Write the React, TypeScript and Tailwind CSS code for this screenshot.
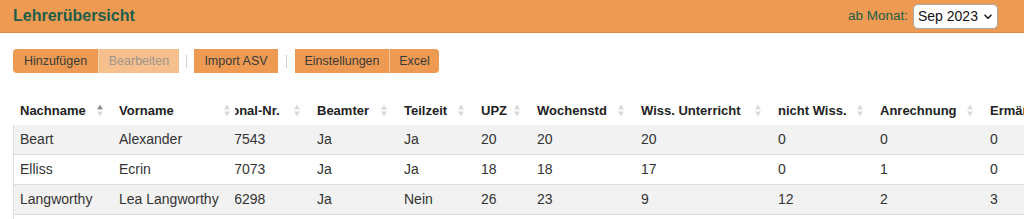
import React from 'react';

const Sort = ({ active }: { active?: boolean }) => (
  <svg width="6" height="13" viewBox="0 0 6 13" className="shrink-0">
    <path d="M0 5.5 L3 0.5 L6 5.5Z" fill={active ? '#8f8f8f' : '#dadada'} />
    <path d="M0 7.5 L3 12.5 L6 7.5Z" fill="#dadada" />
  </svg>
);

type Row = {
  n: string; v: string; p: string; b: string; t: string;
  upz: string; w: string; wiss: string; nw: string; an: string; er: string;
};

const rows: Row[] = [
  { n: 'Beart', v: 'Alexander', p: '10027543', b: 'Ja', t: 'Ja', upz: '20', w: '20', wiss: '20', nw: '0', an: '0', er: '0' },
  { n: 'Elliss', v: 'Ecrin', p: '10037073', b: 'Ja', t: 'Ja', upz: '18', w: '18', wiss: '17', nw: '0', an: '1', er: '0' },
  { n: 'Langworthy', v: 'Lea Langworthy', p: '10046298', b: 'Ja', t: 'Nein', upz: '26', w: '23', wiss: '9', nw: '12', an: '2', er: '3' },
];

const cols: { label: string; w: number; key: keyof Row }[] = [
  { label: 'Personal-Nr.', w: 114, key: 'p' },
  { label: 'Beamter', w: 87, key: 'b' },
  { label: 'Teilzeit', w: 77, key: 't' },
  { label: 'UPZ', w: 56, key: 'upz' },
  { label: 'Wochenstd', w: 104, key: 'w' },
  { label: 'Wiss. Unterricht', w: 137, key: 'wiss' },
  { label: 'nicht Wiss.', w: 102, key: 'nw' },
  { label: 'Anrechnung', w: 110, key: 'an' },
  { label: 'Ermäßigung', w: 120, key: 'er' },
];

export default function App() {
  return (
    <div className="w-[1024px] h-[219px] overflow-hidden bg-white font-['Liberation_Sans',Arial,sans-serif]">
      {/* Top bar */}
      <div className="h-[33px] bg-[#ee9a52] border-b border-[#d98a47] flex items-center justify-between pl-[13px] pr-[26px]">
        <div className="text-[16px] font-bold text-[#1d5e4b] leading-none">Lehrerübersicht</div>
        <div className="flex items-center gap-[5px]">
          <span className="text-[13.5px] text-[#1d5e4b]">ab Monat:</span>
          <div className="relative w-[85px] h-[25px]">
            <select
              defaultValue="sep"
              className="appearance-none w-full h-full bg-white border border-[#a9a9a9] rounded-[5px] pl-[4px] text-[14px] text-[#111] outline-none font-['Liberation_Sans',Arial,sans-serif]"
            >
              <option value="aug">Aug 2023</option>
              <option value="sep">Sep 2023</option>
              <option value="okt">Okt 2023</option>
            </select>
            <svg width="8" height="6" viewBox="0 0 8 6" className="absolute right-[6px] top-[10px] pointer-events-none">
              <path d="M1 1.2 L4 4.2 L7 1.2" stroke="#222" strokeWidth="1.6" fill="none" strokeLinecap="round" strokeLinejoin="round" />
            </svg>
          </div>
        </div>
      </div>

      <div className="pl-[13px]">
        {/* Buttons */}
        <div className="mt-[16px] flex items-center h-[24px] text-[12.5px]">
          <div className="w-[85px] h-full flex items-center justify-center bg-[#ee9a52] text-[#3a3a3a] rounded-l-[4px]">Hinzufügen</div>
          <div className="w-[81px] h-full flex items-center justify-center bg-[#f5c08e] text-[#9e958d] border-l border-[#f7cfa8]">Bearbeiten</div>
          <div className="w-px h-[13px] bg-[#cfcfcf] mx-[7px]" />
          <div className="w-[84px] h-full flex items-center justify-center bg-[#ee9a52] text-[#3a3a3a]">Import ASV</div>
          <div className="w-px h-[13px] bg-[#cfcfcf] mx-[8px]" />
          <div className="w-[94px] h-full flex items-center justify-center bg-[#ee9a52] text-[#3a3a3a]">Einstellungen</div>
          <div className="w-[50px] h-full flex items-center justify-center bg-[#ee9a52] text-[#3a3a3a] border-l border-[#f5c49a] rounded-r-[4px]">Excel</div>
        </div>

        {/* Table */}
        <div className="mt-[23px] flex">
          {/* fixed columns */}
          <div className="w-[222px] shrink-0">
            <div className="flex h-[29px] items-center text-[13px] font-bold text-[#222]">
              <div className="w-[99px] flex items-center justify-between pl-[7px] pr-[9px]">
                <span>Nachname</span>
                <Sort active />
              </div>
              <div className="w-[123px] flex items-center justify-between pl-[7px] pr-[5px]">
                <span>Vorname</span>
                <Sort />
              </div>
            </div>
            {rows.map((r, i) => (
              <div
                key={r.n}
                className={`flex h-[30px] items-center border-b border-[#dddddd] text-[14px] text-[#333] ${i % 2 === 0 ? 'bg-[#f2f2f2]' : 'bg-white'}`}
              >
                <div className="w-[99px] h-full flex items-center border-l border-[#dddddd] pl-[6px]">{r.n}</div>
                <div className="w-[123px] h-full flex items-center pl-[7px]">{r.v}</div>
              </div>
            ))}
            <div className="h-[10px] border-l border-[#dddddd]" />
          </div>

          {/* scrolled columns */}
          <div className="flex-1 min-w-0 overflow-hidden">
            <div className="ml-[-39px] w-max">
              <div className="flex h-[29px] items-center text-[13px] font-bold text-[#222]">
                {cols.map((c) => (
                  <div key={c.label} style={{ width: c.w }} className="flex items-center justify-between pl-[7px] pr-[10px] whitespace-nowrap">
                    <span>{c.label}</span>
                    <Sort />
                  </div>
                ))}
              </div>
              {rows.map((r, i) => (
                <div
                  key={r.n}
                  className={`flex h-[30px] items-center border-b border-[#dddddd] text-[14px] text-[#333] ${i % 2 === 0 ? 'bg-[#f2f2f2]' : 'bg-white'}`}
                >
                  {cols.map((c) => (
                    <div key={c.label} style={{ width: c.w }} className="h-full flex items-center pl-[7px] whitespace-nowrap">
                      {r[c.key]}
                    </div>
                  ))}
                </div>
              ))}
            </div>
          </div>
        </div>
      </div>
    </div>
  );
}
